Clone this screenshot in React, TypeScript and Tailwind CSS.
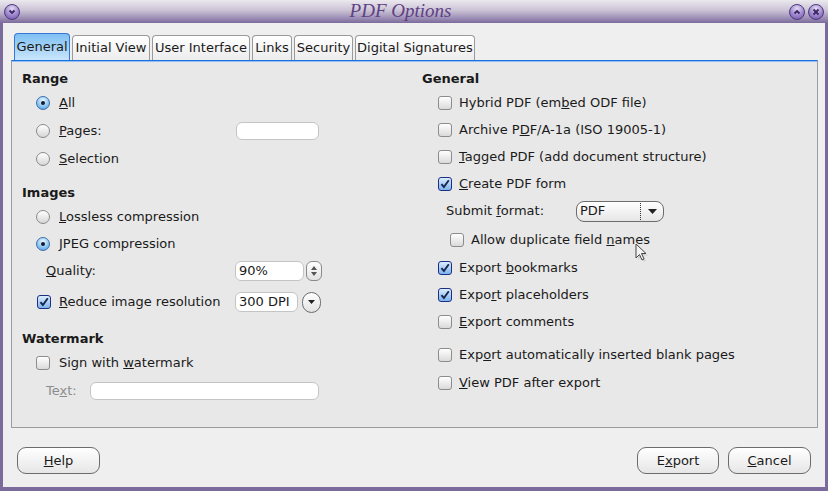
import React from 'react';

function Radio({ checked }: { checked?: boolean }) {
  return (
    <span
      className={`w-[14px] h-[14px] rounded-full border flex items-center justify-center shrink-0 ${
        checked
          ? 'border-[#3b6fae] bg-[radial-gradient(circle_at_50%_30%,#f0f8ff,#86c2f2_60%,#4a8fd6)]'
          : 'border-[#8a8a8a] bg-[linear-gradient(#ffffff,#d6d6d6)]'
      }`}
    >
      {checked && <span className="w-[4px] h-[4px] rounded-full bg-[#141c30]" />}
    </span>
  );
}

function Check({ checked }: { checked?: boolean }) {
  return (
    <span
      className={`w-[14px] h-[14px] rounded-[3px] border flex items-center justify-center shrink-0 ${
        checked
          ? 'border-[#1c2f86] bg-[linear-gradient(#dcedfd,#7db4ec)]'
          : 'border-[#8c8c8c] bg-[linear-gradient(#ffffff,#dadada)]'
      }`}
    >
      {checked && (
        <svg width="10" height="10" viewBox="0 0 10 10">
          <path d="M1.4 5.2 L3.9 8 L8.8 1.2" fill="none" stroke="#18264f" strokeWidth="1.9" />
        </svg>
      )}
    </span>
  );
}

function TitleButton({ children }: { children: React.ReactNode }) {
  return (
    <span className="w-[16px] h-[16px] rounded-full border border-[#4e3a7a] bg-[radial-gradient(circle_at_50%_25%,#e4dbf5,#9d86cf_55%,#6a50a3)] flex items-center justify-center">
      {children}
    </span>
  );
}

function Field({ w, h = 'h-[18px]', children }: { w: string; h?: string; children?: React.ReactNode }) {
  return (
    <span className={`${w} ${h} bg-white border border-[#c4c4c4] rounded-[6px] flex items-center px-[3px] shrink-0`}>
      {children}
    </span>
  );
}

function Tab({ label, w, active }: { label: React.ReactNode; w: string; active?: boolean }) {
  return (
    <div
      className={`${w} flex items-center justify-center rounded-t-[4px] border border-b-0 ${
        active
          ? 'h-[27px] border-[#3778d6] bg-[linear-gradient(#7fc0f3,#c9e5fb)]'
          : 'h-[25px] border-[#9a9a9a] bg-[linear-gradient(#ffffff,#ececec)]'
      }`}
    >
      {label}
    </div>
  );
}

function Btn({ children, w }: { children: React.ReactNode; w: string }) {
  return (
    <div className={`${w} h-[27px] rounded-[9px] border border-[#6c6c6c] bg-[linear-gradient(#ffffff,#e6e6e6)] flex items-center justify-center`}>
      {children}
    </div>
  );
}

export default function App() {
  return (
    <div className="relative w-[828px] h-[491px] bg-[#7b6a9c] flex flex-col font-['DejaVu_Sans',sans-serif] text-[13px] text-[#1a1a1a] overflow-hidden">
      {/* Title bar */}
      <div className="h-[23px] shrink-0 bg-[linear-gradient(#ebe8ee,#cbc3d5_45%,#9a8cb4_80%,#7c6b9b)] flex items-center px-[4px]">
        <TitleButton>
          <svg width="8" height="8" viewBox="0 0 8 8">
            <path d="M1.5 2.5 L4 5 L6.5 2.5" fill="none" stroke="#3a2560" strokeWidth="1.8" />
          </svg>
        </TitleButton>
        <div className="flex-1 text-center font-['Liberation_Serif',serif] italic text-[19px] leading-none text-[#5e4184] -mt-[2px] pr-[8px]">
          PDF Options
        </div>
        <div className="flex gap-[3px]">
          <TitleButton>
            <svg width="8" height="8" viewBox="0 0 8 8">
              <path d="M1.5 5.5 L4 3 L6.5 5.5" fill="none" stroke="#3a2560" strokeWidth="1.8" />
            </svg>
          </TitleButton>
          <TitleButton>
            <svg width="8" height="8" viewBox="0 0 8 8">
              <path d="M1.5 1.5 L6.5 6.5 M6.5 1.5 L1.5 6.5" fill="none" stroke="#3a2560" strokeWidth="1.8" />
            </svg>
          </TitleButton>
        </div>
      </div>

      {/* Body */}
      <div className="flex-1 mx-[3px] mb-[4px] bg-[#efefef] flex flex-col pt-[10px]">
        {/* Tabs */}
        <div className="flex items-end gap-[2px] pl-[11px] h-[27px]">
          <Tab label="General" w="w-[56px]" active />
          <Tab label="Initial View" w="w-[78px]" />
          <Tab label="User Interface" w="w-[98px]" />
          <Tab label="Links" w="w-[40px]" />
          <Tab label="Security" w="w-[59px]" />
          <Tab label="Digital Signatures" w="w-[120px]" />
        </div>

        {/* Panel */}
        <div className="ml-[8px] mr-[7px] h-[368px] bg-[#e8e8e8] border border-[#9c9c9c] border-t-[#1f6fdc] shadow-[inset_0_1px_0_#8cc2f5] flex pt-[8px] pl-[10px]">
          {/* Left column */}
          <div className="w-[400px] flex flex-col">
            <div className="h-[20px] flex items-center font-bold">Range</div>
            <div className="h-[28px] flex items-center pl-[14px]">
              <Radio checked />
              <span className="ml-[9px]"><u>A</u>ll</span>
            </div>
            <div className="h-[28px] flex items-center pl-[14px]">
              <div className="w-[200px] flex items-center">
                <Radio />
                <span className="ml-[9px]"><u>P</u>ages:</span>
              </div>
              <Field w="w-[83px]" />
            </div>
            <div className="h-[28px] flex items-center pl-[14px]">
              <Radio />
              <span className="ml-[9px]"><u>S</u>election</span>
            </div>

            <div className="h-[20px] mt-[10px] flex items-center font-bold">Images</div>
            <div className="h-[27px] flex items-center pl-[14px]">
              <Radio />
              <span className="ml-[9px]"><u>L</u>ossless compression</span>
            </div>
            <div className="h-[27px] flex items-center pl-[14px]">
              <Radio checked />
              <span className="ml-[9px]"><u>J</u>PEG compression</span>
            </div>
            <div className="h-[28px] flex items-center pl-[24px]">
              <span className="w-[189px]"><u>Q</u>uality:</span>
              <Field w="w-[69px]" h="h-[20px]">90%</Field>
              <span className="ml-[2px] w-[16px] h-[20px] rounded-[6px] border border-[#8a8a8a] bg-[linear-gradient(#ffffff,#e2e2e2)] flex flex-col items-center justify-center gap-[2px]">
                <svg width="6" height="4" viewBox="0 0 6 4"><path d="M0 4 L3 0 L6 4 Z" fill="#555" /></svg>
                <svg width="6" height="4" viewBox="0 0 6 4"><path d="M0 0 L3 4 L6 0 Z" fill="#555" /></svg>
              </span>
            </div>
            <div className="h-[34px] flex items-center pl-[15px]">
              <div className="w-[198px] flex items-center">
                <Check checked />
                <span className="ml-[8px]"><u>R</u>educe image resolution</span>
              </div>
              <Field w="w-[63px]" h="h-[20px]">300 DPI</Field>
              <span className="ml-[4px] w-[19px] h-[21px] rounded-full border border-[#6c6c6c] bg-[linear-gradient(#ffffff,#e2e2e2)] flex items-center justify-center">
                <svg width="7" height="4" viewBox="0 0 7 4"><path d="M0 0 L3.5 4 L7 0 Z" fill="#222" /></svg>
              </span>
            </div>

            <div className="h-[20px] mt-[10px] flex items-center font-bold">Watermark</div>
            <div className="h-[28px] flex items-center pl-[14px]">
              <Check />
              <span className="ml-[9px]">Sign with <u>w</u>atermark</span>
            </div>
            <div className="h-[28px] flex items-center pl-[24px]">
              <span className="w-[44px] text-[#8c8c8c]">Te<u>x</u>t:</span>
              <Field w="w-[229px]" />
            </div>
          </div>

          {/* Right column */}
          <div className="flex-1 flex flex-col">
            <div className="h-[20px] flex items-center font-bold">General</div>
            <div className="h-[27px] flex items-center pl-[16px]">
              <Check />
              <span className="ml-[7px]">Hybrid PDF (em<u>b</u>ed ODF file)</span>
            </div>
            <div className="h-[27px] flex items-center pl-[16px]">
              <Check />
              <span className="ml-[7px]">Archive P<u>D</u>F/A-1a (ISO 19005-1)</span>
            </div>
            <div className="h-[27px] flex items-center pl-[16px]">
              <Check />
              <span className="ml-[7px]"><u>T</u>agged PDF (add document structure)</span>
            </div>
            <div className="h-[27px] flex items-center pl-[16px]">
              <Check checked />
              <span className="ml-[7px]"><u>C</u>reate PDF form</span>
            </div>
            <div className="h-[28px] flex items-center pl-[24px]">
              <span className="w-[130px]">Submit <u>f</u>ormat:</span>
              <span className="w-[88px] h-[21px] rounded-[8px] border border-[#6c6c6c] bg-[linear-gradient(#ffffff,#e6e6e6)] flex items-center">
                <span className="w-[63px] pl-[3px]">PDF</span>
                <span className="h-[17px] border-l border-dotted border-[#333]" />
                <span className="flex-1 flex justify-center">
                  <svg width="9" height="5" viewBox="0 0 9 5"><path d="M0 0 L4.5 5 L9 0 Z" fill="#222" /></svg>
                </span>
              </span>
            </div>
            <div className="h-[29px] flex items-center pl-[28px]">
              <Check />
              <span className="ml-[7px]">Allow duplicate field <u>n</u>ames</span>
            </div>
            <div className="h-[27px] flex items-center pl-[16px]">
              <Check checked />
              <span className="ml-[7px]">Export <u>b</u>ookmarks</span>
            </div>
            <div className="h-[27px] flex items-center pl-[16px]">
              <Check checked />
              <span className="ml-[7px]">Expo<u>r</u>t placeholders</span>
            </div>
            <div className="h-[27px] flex items-center pl-[16px]">
              <Check />
              <span className="ml-[7px]"><u>E</u>xport comments</span>
            </div>
            <div className="h-[28px] mt-[6px] flex items-center pl-[16px]">
              <Check />
              <span className="ml-[7px]">Exp<u>o</u>rt automatically inserted blank pages</span>
            </div>
            <div className="h-[27px] flex items-center pl-[16px]">
              <Check />
              <span className="ml-[7px]"><u>V</u>iew PDF after export</span>
            </div>
          </div>
        </div>

        {/* Buttons */}
        <div className="mt-[19px] flex items-center px-[14px]">
          <Btn w="w-[83px]"><span><u>H</u>elp</span></Btn>
          <div className="flex-1" />
          <div className="flex gap-[9px]">
            <Btn w="w-[82px]"><span>E<u>x</u>port</span></Btn>
            <Btn w="w-[83px]"><span><u>C</u>ancel</span></Btn>
          </div>
        </div>
      </div>

      {/* Mouse pointer */}
      <svg className="absolute left-[635px] top-[243px]" width="16" height="22" viewBox="0 0 16 22">
        <path d="M3 3 L3 17 L6.5 13.5 L9 19 L11 18 L8.5 12.5 L13 12.5 Z" fill="#bdbdbd" opacity="0.5" />
        <path d="M1 1 L1 15 L4.5 11.5 L7 17 L9 16 L6.5 10.5 L11 10.5 Z" fill="#f4f4f4" stroke="#444" strokeWidth="1" strokeLinejoin="round" />
      </svg>
    </div>
  );
}
